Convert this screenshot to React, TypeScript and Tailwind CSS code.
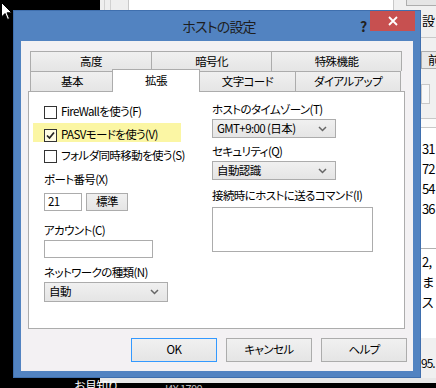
import React from "react";

const font = { fontFamily: '"Noto Sans CJK JP", "Noto Sans", sans-serif' };

function Check({ checked }: { checked?: boolean }) {
  return (
    <div className="w-[13px] h-[13px] border border-[#333333] bg-white/70 flex items-center justify-center shrink-0">
      {checked && (
        <svg width="11" height="11" viewBox="0 0 11 11">
          <path d="M2 5.5 L4.5 8 L9 2.5" stroke="#222" strokeWidth="1.7" fill="none" />
        </svg>
      )}
    </div>
  );
}

function Chevron() {
  return (
    <svg width="9" height="6" viewBox="0 0 9 6" className="shrink-0">
      <path d="M1 1 L4.5 4.5 L8 1" stroke="#666" strokeWidth="1.5" fill="none" />
    </svg>
  );
}

function Select({ text, w, h }: { text: string; w: string; h: string }) {
  return (
    <div
      className={`${w} ${h} border border-[#acacac] bg-gradient-to-b from-[#f0f0f0] to-[#e5e5e5] flex items-center justify-between pl-[4px] pr-[8px] text-black`}
    >
      <span>{text}</span>
      <Chevron />
    </div>
  );
}

function Tab({ label, w, last }: { label: string; w: string; last?: boolean }) {
  return (
    <div
      className={`${w} h-[20px] border-t border-l ${last ? "border-r" : ""} border-[#acacac] bg-gradient-to-b from-[#f0f0f0] to-[#e5e5e5] flex items-center justify-center text-black`}
    >
      {label}
    </div>
  );
}

function Btn({ label, def }: { label: string; def?: boolean }) {
  return (
    <div
      className={`w-[86px] h-[24px] border ${def ? "border-[#3399ff]" : "border-[#acacac]"} bg-gradient-to-b from-[#f0f0f0] to-[#e5e5e5] flex items-center justify-center text-black`}
    >
      {label}
    </div>
  );
}

export default function App() {
  return (
    <div
      className="relative w-[436px] h-[388px] bg-black overflow-hidden text-[11.5px] tracking-[-0.6px] [font-feature-settings:'palt']"
      style={font}
    >
      {/* background windows */}
      <div className="absolute left-[100px] top-0 w-[28px] h-[10px] bg-[#eeeeee] flex">
        <div className="w-[5px] h-full border-r border-[#d0d0d0]" />
        <div className="w-[6px] h-full border-r border-[#d0d0d0]" />
      </div>
      <div className="absolute left-[128px] top-0 w-[265px] h-[10px] bg-white border-l border-[#c8c8c8]" />
      <div className="absolute left-[393px] top-0 w-[43px] h-[378px] bg-[#f0f0f0] border-l border-[#c8c8c8]" />
      <div className="absolute left-[406px] top-[-4px] w-[40px] h-[10px] border border-[#adadad] bg-[#e5e5e5]" />
      <div className="absolute left-[422px] top-[14px] w-[14px] overflow-hidden text-[13px] text-black leading-none">設</div>
      <div className="absolute left-[421px] top-[37px] w-[20px] h-[12px] border-t border-[#c8c8c8]" />
      <div className="absolute left-[421px] top-[51px] w-[20px] h-[18px] border border-[#adadad] bg-[#e8e8e8]" />
      <div className="absolute left-[428px] top-[54px] w-[8px] overflow-hidden text-[12px] text-black leading-none">前</div>
      <div className="absolute left-[421px] top-[84px] w-[9px] h-[20px] border border-[#c8c8c8] bg-[#f8f8f8]" />
      <div className="absolute left-[421px] top-[118px] w-[20px] h-[130px] border-t border-[#c8c8c8] bg-[#fafafa]" />
      <div className="absolute left-[421px] top-[127px] w-[15px] h-[121px] border-t border-[#c8c8c8] bg-white flex flex-col pt-[11px] text-[13px] leading-[20px] tracking-[-1px] text-black">
        <span className="pl-[1px]">31</span>
        <span className="pl-[1px]">72</span>
        <span className="pl-[1px]">54</span>
        <span className="pl-[1px]">36</span>
      </div>
      <div className="absolute left-[421px] top-[248px] w-[15px] h-[90px] border-t border-[#b0b0b0] bg-white flex flex-col pt-[3px] text-[13px] leading-[20px] text-black">
        <span className="pl-[1px]">2,</span>
        <span className="pl-[1px]">ま</span>
        <span className="pl-[1px]">ス</span>
      </div>
      <div className="absolute left-[421px] top-[357px] text-[12px] tracking-[-1px] text-black leading-none">95.</div>
      <div className="absolute left-[100px] top-[378px] w-[336px] h-[5px] bg-[#e8e8e8]" />
      <div className="absolute left-[74px] top-[380px] text-[12px] text-white leading-none">お見知り</div>
      <div className="absolute left-[165px] top-[383px] text-[11px] text-[#bbbbbb] leading-none">ИХ 1700</div>

      {/* mouse cursor */}
      <svg className="absolute left-[1px] top-[2px]" width="12" height="19" viewBox="0 0 12 19">
        <path d="M0.5 0.5 L0.5 15 L4 11.5 L6.5 17.5 L8.5 16.5 L6 10.8 L10.8 10.8 Z" fill="white" stroke="black" strokeWidth="1" />
      </svg>

      {/* dialog */}
      <div className="absolute left-[13px] top-[10px] w-[408px] h-[368px] bg-[#5283c1] border border-[#3f6fae] flex flex-col px-[7px] pb-[6px]">
        <div className="relative h-[30px] shrink-0 flex items-center justify-center">
          <span className="text-[14px] tracking-[-0.8px] text-[#1e1e1e] pt-[1px] pl-[4px]">ホストの設定</span>
          <span className="absolute left-[339px] top-[5px] text-[14px] font-bold text-[#222]">?</span>
          <div className="absolute left-[349px] top-0 w-[45px] h-[20px] bg-[#c75050] flex items-center justify-center">
            <svg width="10" height="10" viewBox="0 0 10 10">
              <path d="M1 1 L9 9 M9 1 L1 9" stroke="white" strokeWidth="1.8" />
            </svg>
          </div>
        </div>

        <div className="flex-1 bg-[#f3f1f3] flex flex-col">
          {/* tabs */}
          <div className="mt-[10px] ml-[9px] flex">
            <Tab label="高度" w="w-[121px]" />
            <Tab label="暗号化" w="w-[120px]" />
            <Tab label="特殊機能" w="w-[131px]" last />
          </div>
          <div className="ml-[9px] flex items-end h-[20px]">
            <Tab label="基本" w="w-[83px]" />
            <div className="relative top-[1px] z-10 w-[88px] h-[23px] -ml-[1px] border-t border-l border-r border-[#acacac] bg-white flex items-center justify-center text-black">
              拡張
            </div>
            <div className="-ml-[1px] flex">
              <Tab label="文字コード" w="w-[96px]" />
              <Tab label="ダイアルアップ" w="w-[106px]" last />
            </div>
          </div>

          {/* panel */}
          <div className="ml-[7px] w-[377px] h-[238px] border border-[#acacac] bg-white flex pl-[15px] pt-[9px] text-black">
            <div className="w-[168px] flex flex-col">
              <div className="h-[22px] flex items-center gap-[4px]">
                <Check />
                <span>FireWallを使う(F)</span>
              </div>
              <div className="relative h-[22px] flex items-center gap-[4px]">
                <div className="absolute left-[-11px] top-0 w-[148px] h-[19px] bg-[#fbf6a4]" />
                <div className="relative flex items-center gap-[4px] pt-[2px]">
                  <Check checked />
                  <span>PASVモードを使う(V)</span>
                </div>
              </div>
              <div className="h-[22px] flex items-center gap-[4px]">
                <Check />
                <span>フォルダ同時移動を使う(S)</span>
              </div>
              <div className="mt-[3px] h-[20px] flex items-center">ポート番号(X)</div>
              <div className="mt-[3px] h-[18px] flex gap-[4px]">
                <div className="w-[38px] h-[18px] border border-[#acacac] bg-white flex items-center pl-[3px]">21</div>
                <div className="w-[42px] h-[18px] border border-[#acacac] bg-gradient-to-b from-[#f0f0f0] to-[#e5e5e5] flex items-center justify-center">
                  標準
                </div>
              </div>
              <div className="mt-[10px] h-[19px] flex items-center">アカウント(C)</div>
              <div className="w-[109px] h-[18px] border border-[#acacac] bg-white" />
              <div className="mt-[5px] h-[19px] flex items-center">ネットワークの種類(N)</div>
              <Select text="自動" w="w-[124px]" h="h-[20px]" />
            </div>
            <div className="flex flex-col">
              <div className="h-[18px] flex items-center">ホストのタイムゾーン(T)</div>
              <Select text="GMT+9:00 (日本)" w="w-[124px]" h="h-[19px]" />
              <div className="mt-[5px] h-[18px] flex items-center">セキュリティ(Q)</div>
              <Select text="自動認識" w="w-[124px]" h="h-[19px]" />
              <div className="mt-[7px] h-[18px] flex items-center">接続時にホストに送るコマンド(I)</div>
              <div className="mt-[2px] w-[161px] h-[45px] border border-[#acacac] bg-white" />
            </div>
          </div>

          {/* buttons */}
          <div className="mt-[9px] flex justify-end gap-[9px] pr-[6px]">
            <Btn label="OK" def />
            <Btn label="キャンセル" />
            <Btn label="ヘルプ" />
          </div>
        </div>
      </div>
    </div>
  );
}
